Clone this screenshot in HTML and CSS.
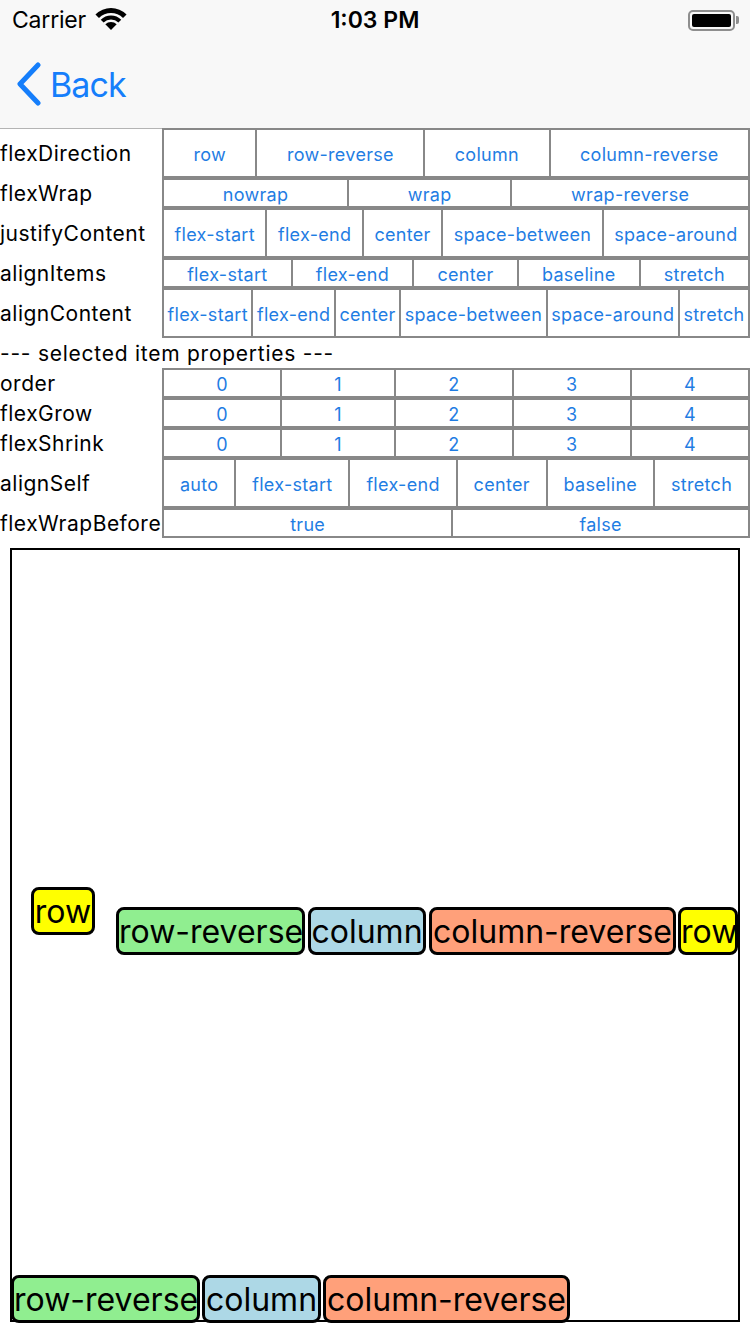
FILE: index.html
```html
<!DOCTYPE html>
<html>
<head>
<meta charset="utf-8">
<title>Flex playground</title>
<link rel="stylesheet" href="styles.css">
</head>
<body>
<header class="top">
  <div class="status">
    <div class="status-left">
      <span class="carrier">Carrier</span>
      <svg class="wifi" width="32" height="24" viewBox="0 0 32 24">
        <path d="M0.44 7.44 A22 22 0 0 1 31.56 7.44 L28.02 10.98 A17 17 0 0 0 3.98 10.98 Z"/>
        <path d="M5.75 12.75 A14.5 14.5 0 0 1 26.25 12.75 L23.42 15.58 A10.5 10.5 0 0 0 8.58 15.58 Z"/>
        <path d="M16 23 L10.34 17.34 A8 8 0 0 1 21.66 17.34 Z"/>
      </svg>
    </div>
    <div class="time">1:03 PM</div>
    <div class="battery">
      <div class="batt-body"><div class="batt-fill"></div></div>
      <div class="batt-nub"></div>
    </div>
  </div>
  <nav class="nav">
    <svg class="chev" width="26" height="44" viewBox="0 0 26 44">
      <path d="M22 3 L4 22 L22 41"/>
    </svg>
    <span class="back">Back</span>
  </nav>
</header>

<main class="controls">
  <div class="row tall">
    <div class="label">flexDirection</div>
    <div class="seg"><div class="btn">row</div><div class="btn">row-reverse</div><div class="btn">column</div><div class="btn">column-reverse</div></div>
  </div>
  <div class="row">
    <div class="label">flexWrap</div>
    <div class="seg"><div class="btn">nowrap</div><div class="btn">wrap</div><div class="btn">wrap-reverse</div></div>
  </div>
  <div class="row tall">
    <div class="label">justifyContent</div>
    <div class="seg"><div class="btn">flex-start</div><div class="btn">flex-end</div><div class="btn">center</div><div class="btn">space-between</div><div class="btn">space-around</div></div>
  </div>
  <div class="row">
    <div class="label">alignItems</div>
    <div class="seg"><div class="btn">flex-start</div><div class="btn">flex-end</div><div class="btn">center</div><div class="btn">baseline</div><div class="btn">stretch</div></div>
  </div>
  <div class="row tall">
    <div class="label">alignContent</div>
    <div class="seg tight"><div class="btn">flex-start</div><div class="btn">flex-end</div><div class="btn">center</div><div class="btn">space-between</div><div class="btn">space-around</div><div class="btn">stretch</div></div>
  </div>
  <div class="section">--- selected item properties ---</div>
  <div class="row">
    <div class="label">order</div>
    <div class="seg"><div class="btn">0</div><div class="btn">1</div><div class="btn">2</div><div class="btn">3</div><div class="btn">4</div></div>
  </div>
  <div class="row">
    <div class="label">flexGrow</div>
    <div class="seg"><div class="btn">0</div><div class="btn">1</div><div class="btn">2</div><div class="btn">3</div><div class="btn">4</div></div>
  </div>
  <div class="row">
    <div class="label">flexShrink</div>
    <div class="seg"><div class="btn">0</div><div class="btn">1</div><div class="btn">2</div><div class="btn">3</div><div class="btn">4</div></div>
  </div>
  <div class="row tall">
    <div class="label">alignSelf</div>
    <div class="seg"><div class="btn">auto</div><div class="btn">flex-start</div><div class="btn">flex-end</div><div class="btn">center</div><div class="btn">baseline</div><div class="btn">stretch</div></div>
  </div>
  <div class="row">
    <div class="label">flexWrapBefore</div>
    <div class="seg"><div class="btn">true</div><div class="btn">false</div></div>
  </div>
</main>

<section class="stage">
  <div class="line line1">
    <div class="item yellow w-row lead">row</div>
    <div class="item green w-rr drop first-gap">row-reverse</div>
    <div class="item blue w-col drop">column</div>
    <div class="item salmon w-cr drop">column-reverse</div>
    <div class="item yellow w-row-end drop small-gap">row</div>
  </div>
  <div class="line line2">
    <div class="item green w-rr">row-reverse</div>
    <div class="item blue w-col2 small-gap">column</div>
    <div class="item salmon w-cr small-gap">column-reverse</div>
  </div>
</section>
</body>
</html>
```

FILE: styles.css
```css
* { box-sizing: border-box; }

html, body {
  margin: 0;
  padding: 0;
  background: #ffffff;
  width: 750px;
  height: 1334px;
  overflow: hidden;
  font-family: Inter, "Noto Sans", sans-serif;
  color: #000;
}

/* ---------- header ---------- */
.top {
  background: #f8f8f8;
  height: 128px;
  box-shadow: 0 1px 0 #b4b4b4;
}

.status {
  height: 40px;
  display: grid;
  grid-template-columns: 1fr auto 1fr;
  align-items: center;
}

.status-left {
  display: flex;
  align-items: center;
  padding-left: 12px;
  gap: 9px;
}

.carrier {
  font-size: 23px;
  letter-spacing: -0.2px;
}

.wifi { fill: #000; margin-top: -2px; }

.time {
  font-size: 23px;
  font-weight: 600;
}

.battery {
  justify-self: end;
  display: flex;
  align-items: center;
  padding-right: 11px;
}

.batt-body {
  width: 47px;
  height: 21px;
  border: 2px solid #8e8e8e;
  border-radius: 5px;
  padding: 2px;
}

.batt-fill {
  width: 100%;
  height: 100%;
  background: #000;
  border-radius: 2px;
}

.batt-nub {
  width: 3px;
  height: 8px;
  background: #8e8e8e;
  border-radius: 0 2px 2px 0;
  margin-left: 1px;
}

.nav {
  height: 88px;
  display: flex;
  align-items: center;
  padding-left: 16px;
  gap: 8px;
}

.chev {
  fill: none;
  stroke: #157efb;
  stroke-width: 5;
  stroke-linecap: round;
  stroke-linejoin: round;
}

.back {
  font-size: 34px;
  color: #157efb;
  letter-spacing: -0.9px;
}

/* ---------- controls ---------- */
.controls {
  display: flex;
  flex-direction: column;
}

.row {
  display: flex;
  height: 30px;
}

.row.tall { height: 50px; }

.label {
  width: 162px;
  flex: none;
  display: flex;
  align-items: center;
  font-size: 21px;
  letter-spacing: 0.5px;
  white-space: nowrap;
}

.section {
  height: 30px;
  display: flex;
  align-items: center;
  font-size: 21px;
  letter-spacing: 0.75px;
}

.seg {
  flex: 1;
  display: flex;
  border: 1px solid #888;
}

.btn {
  flex: 1 1 auto;
  border: 1px solid #888;
  display: flex;
  align-items: center;
  justify-content: center;
  padding: 2px 2px 0;
  color: #1f7de3;
  font-size: 18px;
  letter-spacing: 0.3px;
  white-space: nowrap;
}

.seg.tight .btn { padding: 2px 0 0; }

/* ---------- stage ---------- */
.stage {
  margin: 10px 10px 0 10px;
  height: 774px;
  border: 2px solid #000;
  display: flex;
  flex-direction: column;
}

.line {
  display: flex;
  align-items: flex-start;
}

.line1 { margin-top: 337px; }

.line2 {
  margin-top: auto;
  margin-left: -1px;
  margin-bottom: -3px;
}

.item {
  flex: none;
  height: 48px;
  border: 3px solid #000;
  border-radius: 8px;
  font-size: 32px;
  line-height: 43px;
  text-align: center;
  white-space: nowrap;
  overflow: visible;
}

.yellow { background: #ffff00; }
.green { background: #90ee90; }
.blue { background: #add8e6; }
.salmon { background: #ffa07a; }

.w-row { width: 64px; }
.w-row-end { width: 60px; }
.w-rr { width: 189px; }
.w-col { width: 118px; }
.w-col2 { width: 119px; }
.w-cr { width: 247px; }

.lead { margin-left: 19px; }
.drop { margin-top: 20px; margin-left: 3px; }
.first-gap { margin-left: 21px; }
.small-gap { margin-left: 2px; }
```
